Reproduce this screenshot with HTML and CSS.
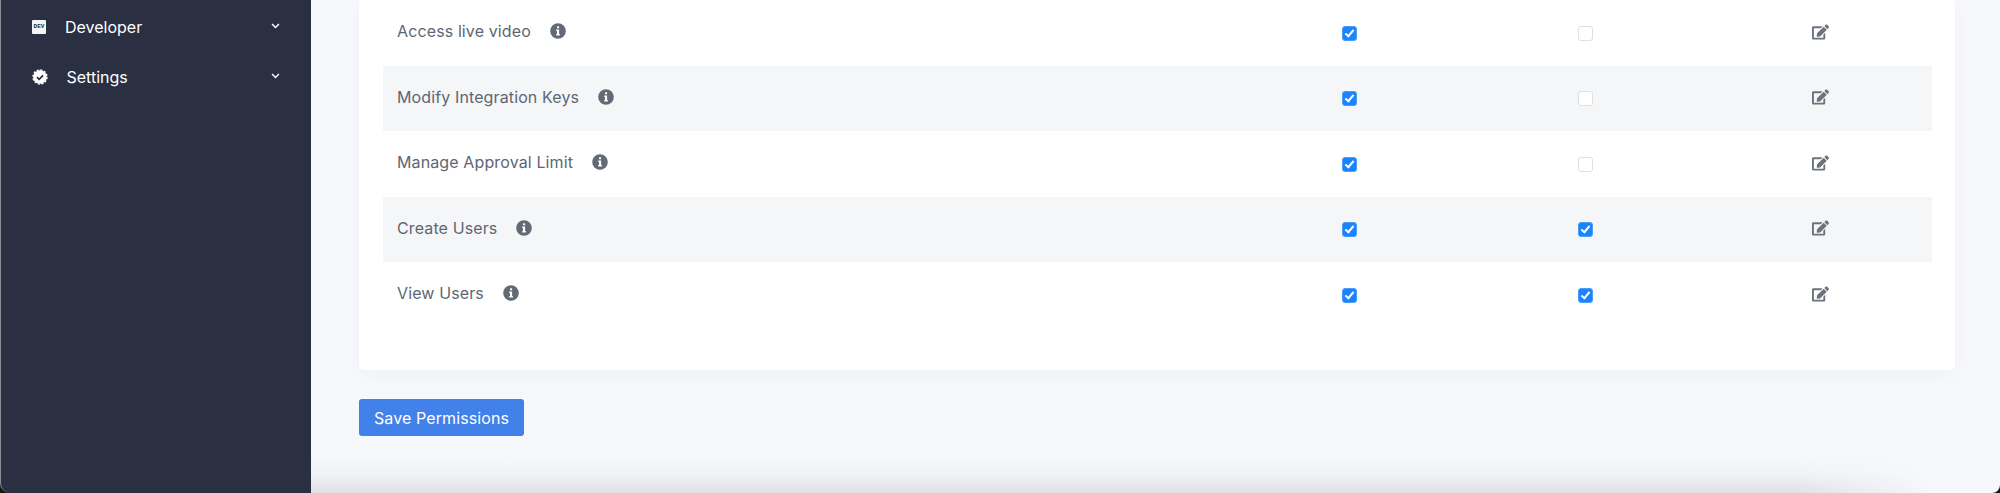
FILE: index.html
```html
<!DOCTYPE html>
<html lang="en">
<head>
    <meta charset="UTF-8">
    <title>Permissions</title>
    <link rel="stylesheet" href="styles.css">
</head>
<body>
    <svg class="defs" width="0" height="0">
        <symbol id="edit" viewBox="0 0 576 512">
            <path fill="currentColor" d="M402.6 83.2l90.2 90.2c3.8 3.8 3.8 10 0 13.8L274.4 405.6l-92.8 10.3c-12.4 1.4-22.9-9.1-21.5-21.5l10.3-92.8L388.8 83.2c3.8-3.8 10-3.8 13.8 0zm162-22.9l-48.8-48.8c-15.2-15.2-39.9-15.2-55.2 0l-35.4 35.4c-3.8 3.8-3.8 10 0 13.8l90.2 90.2c3.8 3.8 10 3.8 13.8 0l35.4-35.4c15.2-15.3 15.2-40 0-55.2zM384 346.2V448H64V128h229.8c3.2 0 6.2-1.3 8.5-3.5l40-40c7.6-7.6 2.2-20.5-8.5-20.5H48C21.5 64 0 85.5 0 112v352c0 26.5 21.5 48 48 48h352c26.5 0 48-21.5 48-48V306.2c0-10.7-12.9-16-20.5-8.5l-40 40c-2.2 2.3-3.5 5.3-3.5 8.5z"/>
        </symbol>
        <symbol id="info" viewBox="0 0 16 16">
            <circle cx="8" cy="8" r="7.8" fill="currentColor"/>
            <rect x="7" y="3.2" width="2.1" height="2.1" rx=".6" fill="#fff"/>
            <path fill="#fff" d="M6.2 6.6h2.9v4.5h.8v1.3H6.2v-1.3h.8V7.9h-.8z"/>
        </symbol>
        <symbol id="chevron" viewBox="0 0 10 7">
            <path d="M1 1.2l4 4 4-4" fill="none" stroke="currentColor" stroke-width="1.7"/>
        </symbol>
        <symbol id="badge" viewBox="0 0 16 16">
            <circle cx="8" cy="8" r="6.8" fill="#fff"/>
            <circle cx="8" cy="8" r="7" fill="none" stroke="#fff" stroke-width="1.4" stroke-dasharray="2.2 1.47"/>
            <path d="M4.9 8.2l2.2 2.1 4-4" fill="none" stroke="#2a3042" stroke-width="1.7"/>
        </symbol>
    </svg>

    <aside class="sidebar">
        <a class="nav-item" href="#developer">
            <span class="dev-icon">DEV</span>
            <span class="nav-label">Developer</span>
            <svg class="chevron"><use href="#chevron"/></svg>
        </a>
        <a class="nav-item" href="#settings">
            <svg class="badge-icon"><use href="#badge"/></svg>
            <span class="nav-label nav-label-wide">Settings</span>
            <svg class="chevron"><use href="#chevron"/></svg>
        </a>
    </aside>

    <main class="content">
        <section class="card">
            <div class="perm-row">
                <div class="perm-name">Access live video <svg class="info"><use href="#info"/></svg></div>
                <input class="perm-check" type="checkbox" checked>
                <input class="perm-check" type="checkbox">
                <a class="perm-edit" href="#edit"><svg><use href="#edit"/></svg></a>
            </div>
            <div class="perm-row">
                <div class="perm-name">Modify Integration Keys <svg class="info"><use href="#info"/></svg></div>
                <input class="perm-check" type="checkbox" checked>
                <input class="perm-check" type="checkbox">
                <a class="perm-edit" href="#edit"><svg><use href="#edit"/></svg></a>
            </div>
            <div class="perm-row">
                <div class="perm-name">Manage Approval Limit <svg class="info"><use href="#info"/></svg></div>
                <input class="perm-check" type="checkbox" checked>
                <input class="perm-check" type="checkbox">
                <a class="perm-edit" href="#edit"><svg><use href="#edit"/></svg></a>
            </div>
            <div class="perm-row">
                <div class="perm-name">Create Users <svg class="info"><use href="#info"/></svg></div>
                <input class="perm-check" type="checkbox" checked>
                <input class="perm-check" type="checkbox" checked>
                <a class="perm-edit" href="#edit"><svg><use href="#edit"/></svg></a>
            </div>
            <div class="perm-row">
                <div class="perm-name">View Users <svg class="info"><use href="#info"/></svg></div>
                <input class="perm-check" type="checkbox" checked>
                <input class="perm-check" type="checkbox" checked>
                <a class="perm-edit" href="#edit"><svg><use href="#edit"/></svg></a>
            </div>
        </section>
        <button class="save-btn" type="button">Save Permissions</button>
    </main>

    <div class="bottom-fade"></div>
</body>
</html>
```

FILE: styles.css
```css
html, body {
    height: 100%;
}
body {
    display: flex;
    margin: 0;
    overflow: hidden;
    background-color: #14180f;
    font-family: Inter, "Noto Sans", sans-serif;
}
.defs {
    position: absolute;
}

/* sidebar */
.sidebar {
    flex: 0 0 311px;
    box-sizing: border-box;
    padding-top: 2px;
    background-color: #2a3042;
    border-left: 1px solid #8b8e96;
    border-bottom-left-radius: 10px;
}
.nav-item {
    display: flex;
    align-items: center;
    height: 50px;
    padding-left: 31px;
    color: #fff;
    font-size: 16px;
    text-decoration: none;
}
.dev-icon {
    flex: 0 0 14px;
    height: 14px;
    border-radius: 1px;
    background-color: #f4f5f7;
    color: #2a3042;
    font-family: "Liberation Mono", monospace;
    font-size: 6px;
    font-weight: bold;
    line-height: 14px;
    text-align: center;
}
.badge-icon {
    flex: 0 0 16px;
    height: 16px;
}
.nav-label {
    flex: 1;
    margin-left: 19px;
}
.nav-label-wide {
    margin-left: 18.5px;
}
.chevron {
    flex: 0 0 9px;
    width: 9px;
    height: 6px;
    margin: -2px 31px 0 0;
}

/* main column */
.content {
    flex: 1;
    padding: 0 45px 0 48px;
    background-color: #f7f8fc;
    border-bottom-right-radius: 8px;
}
.card {
    box-sizing: border-box;
    height: 370px;
    padding: 0 23px 0 24px;
    background-color: #fff;
    border-radius: 0 0 5px 5px;
    box-shadow: 0 6px 20px rgba(40, 50, 90, 0.03);
}
.perm-row {
    display: grid;
    grid-template-columns: 848px 236px 236px 229px;
    align-items: center;
    height: 65.5px;
}
.perm-row:nth-child(even) {
    background-color: #f5f6f8;
}
.perm-name {
    display: flex;
    align-items: center;
    gap: 19px;
    margin-top: -3px;
    padding-left: 14px;
    color: #5e6673;
    font-size: 16px;
    letter-spacing: 0.12px;
}
.info {
    flex: 0 0 16px;
    width: 16px;
    height: 16px;
    color: #626a76;
}
.perm-check {
    appearance: none;
    position: relative;
    justify-self: center;
    box-sizing: border-box;
    width: 15px;
    height: 15px;
    margin: 1px 0 0;
    background-color: #fff;
    border: 1px solid #dfe0e2;
    border-radius: 3px;
}
.perm-check:checked {
    background-color: #1a84ff;
    border-color: #4a9dff;
}
.perm-check:checked::after {
    content: "";
    position: absolute;
    left: 4px;
    top: 1px;
    width: 3px;
    height: 7px;
    border: solid #fff;
    border-width: 0 2px 2px 0;
    transform: rotate(40deg);
}
.perm-edit {
    display: flex;
    padding-left: 109px;
    color: #6c737d;
}
.perm-edit svg {
    width: 17px;
    height: 16px;
    margin-top: -2px;
}
.save-btn {
    display: block;
    width: 165px;
    height: 37px;
    margin-top: 29px;
    padding: 0;
    background-color: #4280ea;
    border: none;
    border-radius: 3px;
    color: #fff;
    font-family: inherit;
    font-size: 16px;
    letter-spacing: 0.1px;
}

/* shadow of whatever sits under the screenshot's bottom edge */
.bottom-fade {
    position: absolute;
    left: 311px;
    right: 0;
    bottom: 0;
    height: 40px;
    background: linear-gradient(rgba(200, 202, 206, 0), rgba(200, 202, 206, 0.1) 50%, rgba(200, 202, 206, 0.5));
    -webkit-mask-image: linear-gradient(to right, #000 88%, transparent 96%);
    mask-image: linear-gradient(to right, #000 88%, transparent 96%);
    pointer-events: none;
}
```
